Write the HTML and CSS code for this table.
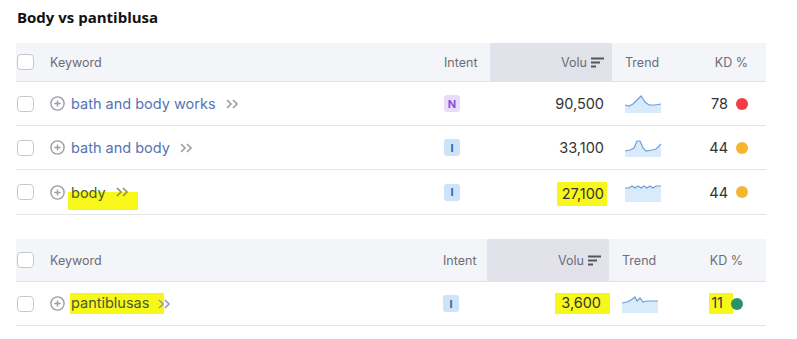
FILE: index.html
```html
<!DOCTYPE html>
<html>
<head>
<meta charset="utf-8">
<link rel="stylesheet" href="styles.css">
</head>
<body>
<h1 class="title">Body vs pantiblusa</h1>

<div class="table">
  <div class="row head">
    <div class="c-check"><span class="cb"></span></div>
    <div class="c-kw">Keyword</div>
    <div class="c-intent">Intent</div>
    <div class="c-vol sorted">Volu <svg class="sort" width="13" height="11" viewBox="0 0 13 11"><path d="M0 1.5h13M0 5.5h9M0 9.5h5" stroke="#55575f" stroke-width="1.8"/></svg></div>
    <div class="c-trend">Trend</div>
    <div class="c-kd">KD %</div>
  </div>
  <div class="row">
    <div class="c-check"><span class="cb"></span></div>
    <div class="c-kw"><svg class="plus" width="15" height="15" viewBox="0 0 15 15"><circle cx="7.5" cy="7.5" r="6.6" fill="none" stroke="#9a9da5" stroke-width="1.4"/><path d="M7.5 4.4v6.2M4.4 7.5h6.2" stroke="#9a9da5" stroke-width="1.4"/></svg><span class="link">bath and body works</span><svg class="chev" width="13" height="10" viewBox="0 0 13 10"><path d="M1 1l4 4-4 4M7 1l4 4-4 4" fill="none" stroke="#9a9ca4" stroke-width="1.6"/></svg></div>
    <div class="c-intent"><span class="badge n">N</span></div>
    <div class="c-vol">90,500</div>
    <div class="c-trend"><svg width="37" height="19" viewBox="0 0 37 19"><path d="M0 11 L4 12 L8 10 L12 6 L16 2 L20 8 L24 11 L30 11 L36 10 L36 19 L0 19Z" fill="#d9eafb"/><path d="M0 11 L4 12 L8 10 L12 6 L16 2 L20 8 L24 11 L30 11 L36 10" fill="none" stroke="#6e9fd6" stroke-width="1.2"/></svg></div>
    <div class="c-kd">78 <span class="dot red"></span></div>
  </div>
  <div class="row">
    <div class="c-check"><span class="cb"></span></div>
    <div class="c-kw"><svg class="plus" width="15" height="15" viewBox="0 0 15 15"><circle cx="7.5" cy="7.5" r="6.6" fill="none" stroke="#9a9da5" stroke-width="1.4"/><path d="M7.5 4.4v6.2M4.4 7.5h6.2" stroke="#9a9da5" stroke-width="1.4"/></svg><span class="link">bath and body</span><svg class="chev" width="13" height="10" viewBox="0 0 13 10"><path d="M1 1l4 4-4 4M7 1l4 4-4 4" fill="none" stroke="#9a9ca4" stroke-width="1.6"/></svg></div>
    <div class="c-intent"><span class="badge i">I</span></div>
    <div class="c-vol">33,100</div>
    <div class="c-trend"><svg width="37" height="19" viewBox="0 0 37 19"><path d="M0 13 L5 12 L9 10 L12 3 L15 3 L18 10 L21 13 L27 12 L31 11 L36 6 L36 19 L0 19Z" fill="#d9eafb"/><path d="M0 13 L5 12 L9 10 L12 3 L15 3 L18 10 L21 13 L27 12 L31 11 L36 6" fill="none" stroke="#6e9fd6" stroke-width="1.2"/></svg></div>
    <div class="c-kd">44 <span class="dot yellow"></span></div>
  </div>
  <div class="row last">
    <div class="c-check"><span class="cb"></span></div>
    <div class="c-kw"><svg class="plus" width="15" height="15" viewBox="0 0 15 15"><circle cx="7.5" cy="7.5" r="6.6" fill="none" stroke="#9a9da5" stroke-width="1.4"/><path d="M7.5 4.4v6.2M4.4 7.5h6.2" stroke="#9a9da5" stroke-width="1.4"/></svg><span class="hl hl-body"><span class="link dark">body</span><svg class="chev" width="13" height="10" viewBox="0 0 13 10"><path d="M1 1l4 4-4 4M7 1l4 4-4 4" fill="none" stroke="#8f9060" stroke-width="1.6"/></svg></span></div>
    <div class="c-intent"><span class="badge i">I</span></div>
    <div class="c-vol"><span class="hl hl-num">27,100</span></div>
    <div class="c-trend"><svg width="37" height="19" viewBox="0 0 37 19"><path d="M0 5 L4 5 L7 3 L10 5 L13 3 L16 5 L19 3 L22 5 L25 3 L28 5 L31 3 L36 3 L36 19 L0 19Z" fill="#d9eafb"/><path d="M0 5 L4 5 L7 3 L10 5 L13 3 L16 5 L19 3 L22 5 L25 3 L28 5 L31 3 L36 3" fill="none" stroke="#6e9fd6" stroke-width="1.2"/></svg></div>
    <div class="c-kd">44 <span class="dot yellow"></span></div>
  </div>
</div>

<div class="table second">
  <div class="row head tall">
    <div class="c-check"><span class="cb"></span></div>
    <div class="c-kw">Keyword</div>
    <div class="c-intent">Intent</div>
    <div class="c-vol sorted">Volu <svg class="sort" width="13" height="11" viewBox="0 0 13 11"><path d="M0 1.5h13M0 5.5h9M0 9.5h5" stroke="#55575f" stroke-width="1.8"/></svg></div>
    <div class="c-trend">Trend</div>
    <div class="c-kd">KD %</div>
  </div>
  <div class="row">
    <div class="c-check"><span class="cb"></span></div>
    <div class="c-kw"><svg class="plus" width="15" height="15" viewBox="0 0 15 15"><circle cx="7.5" cy="7.5" r="6.6" fill="none" stroke="#9a9da5" stroke-width="1.4"/><path d="M7.5 4.4v6.2M4.4 7.5h6.2" stroke="#9a9da5" stroke-width="1.4"/></svg><span class="hl hl-panti"><span class="link dark">pantiblusas</span></span><svg class="chev tight" width="13" height="10" viewBox="0 0 13 10"><path d="M1 1l4 4-4 4M7 1l4 4-4 4" fill="none" stroke="#9a9ca4" stroke-width="1.6"/></svg></div>
    <div class="c-intent"><span class="badge i">I</span></div>
    <div class="c-vol"><span class="hl hl-num2">3,600</span></div>
    <div class="c-trend"><svg width="37" height="19" viewBox="0 0 37 19"><path d="M0 9 L5 8 L9 6 L13 3 L15 7 L18 4 L21 8 L25 7 L36 7 L36 19 L0 19Z" fill="#d9eafb"/><path d="M0 9 L5 8 L9 6 L13 3 L15 7 L18 4 L21 8 L25 7 L36 7" fill="none" stroke="#6e9fd6" stroke-width="1.2"/></svg></div>
    <div class="c-kd"><span class="hl hl-kd">11</span><span class="dot green"></span></div>
  </div>
</div>
</body>
</html>
```

FILE: styles.css
```css
* { box-sizing: border-box; }
body {
  margin: 0;
  background: #fff;
  font-family: Inter, "Noto Sans", sans-serif;
  color: #333;
}
.title {
  margin: 0;
  padding: 8px 0 0 17px;
  height: 43px;
  font-family: "Open Sans", "Liberation Sans", sans-serif;
  font-weight: 700;
  font-size: 15px;
  line-height: 19px;
  color: #111;
}
.table {
  margin-left: 16px;
  width: 750px;
}
.second { margin-top: 24px; }
.row {
  display: grid;
  grid-template-columns: 34px 394px 46px 122px 88px 66px;
  height: 44px;
  align-items: stretch;
  border-bottom: 1px solid #e4e5ea;
  font-size: 14.5px;
}
.row.last { height: 45px; }
.second .row {
  grid-template-columns: 34px 393px 44px 122px 88px 69px;
}
.row > div {
  display: flex;
  align-items: center;
}
.row.head {
  height: 39px;
  background: #f4f5f9;
  font-size: 12.5px;
  color: #6b6d77;
  border-bottom: 1px solid #e1e3e9;
}
.row.head.tall { height: 43px; }
.cb {
  display: block;
  width: 17px;
  height: 16px;
  margin-left: 1px;
  border: 1.5px solid #c6c8cf;
  border-radius: 4px;
  background: #fff;
}
.plus { margin-right: 6px; flex: none; }
.link { color: #5673b6; }
.link.dark { color: #4b5a2a; }
.chev {
  flex: none;
  margin-left: 10px;
}
.chev.tight { margin-left: -6px; }
.c-vol {
  justify-content: flex-end;
  padding-right: 8px;
}
.row.head .c-vol.sorted { background: #e2e3ea; }
.sort { margin-left: 4px; }
.c-trend { padding-left: 13px; }
.c-kd {
  justify-content: flex-end;
  padding-right: 18px;
}
.second .c-kd { padding-right: 23px; }
.badge {
  display: inline-flex;
  align-items: center;
  justify-content: center;
  width: 16px;
  height: 17px;
  border-radius: 3px;
  font-size: 11px;
  font-weight: 700;
}
.badge.n { background: #e8dcfa; color: #8b4fe0; }
.badge.i { background: #cde3f8; color: #2f63b0; }
.dot {
  display: inline-block;
  width: 12px;
  height: 12px;
  border-radius: 50%;
  margin-left: 8px;
}
.dot.red { background: #f23c46; }
.dot.yellow { background: #f5b52d; }
.dot.green { background: #2a9468; margin-left: 0; }
.hl { background: #f7f71a; }
.hl-body {
  display: inline-flex;
  align-items: center;
  height: 18px;
  padding: 0 9px 0 3px;
  margin-left: -3px;
  position: relative;
  top: 9px;
}
.hl-body .link { position: relative; top: -9px; }
.hl-body .chev { position: relative; top: -9px; margin-left: 10px; }
.hl-num {
  padding: 3px 3px 4px 5px;
  margin-right: -3px;
  position: relative;
  top: 2px;
}
.hl-panti { padding: 1px 15px 3px 1px; margin-left: -1px; }
.hl-num2 { padding: 1px 9px 3px 6px; margin-right: -9px; }
.hl-kd { padding: 1px 10px 3px 2px; margin-right: -2px; }
```
